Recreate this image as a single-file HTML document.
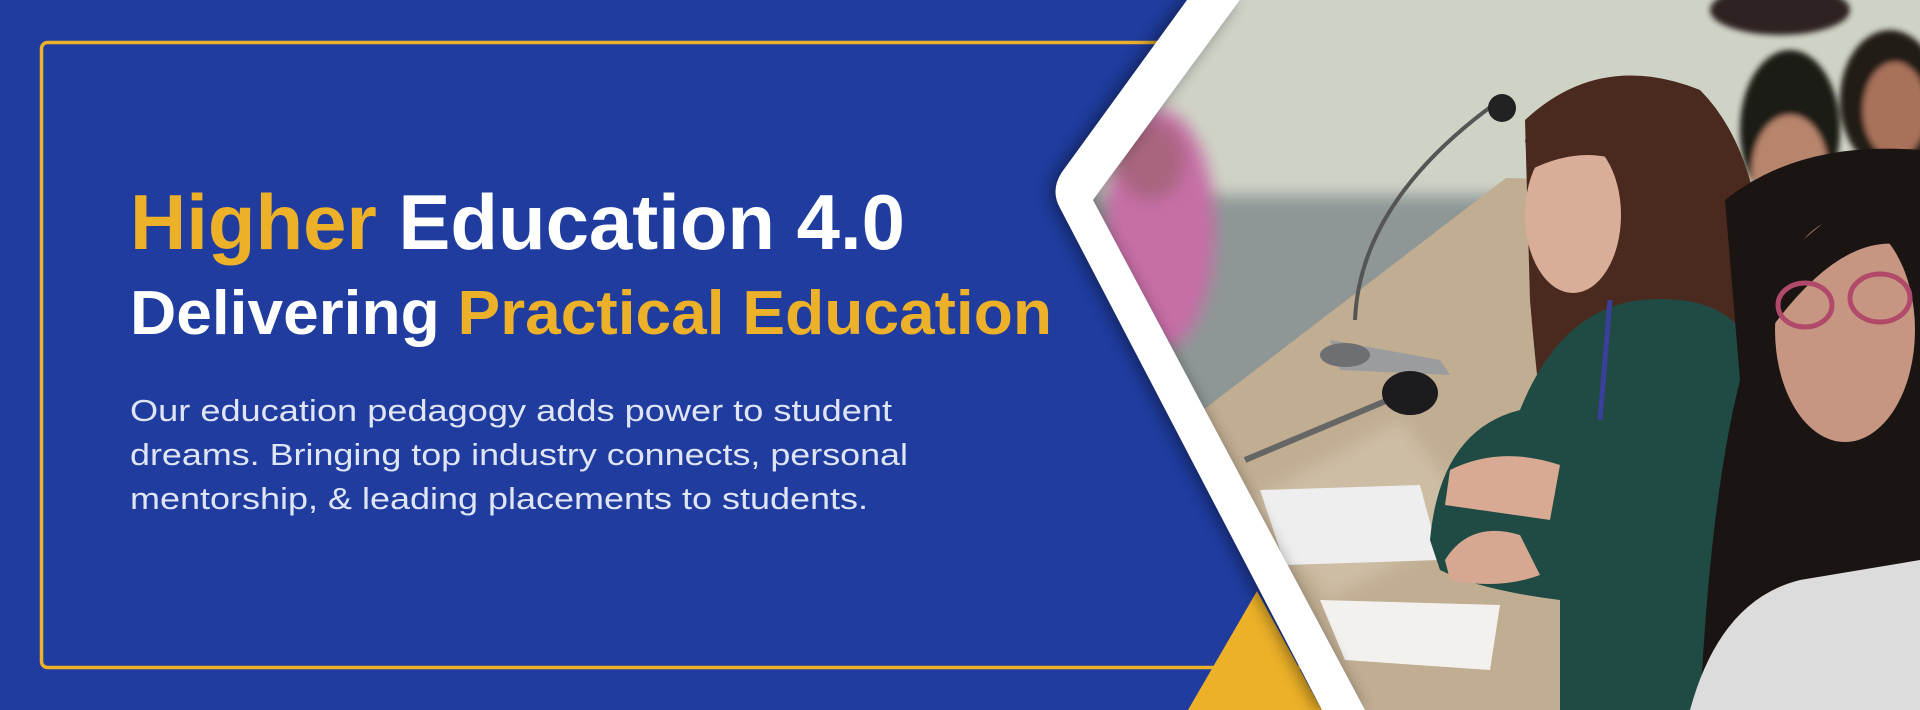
<!DOCTYPE html>
<html><head><meta charset="utf-8"><style>
html,body{margin:0;padding:0;width:1920px;height:710px;overflow:hidden;background:#1f3c9e}
svg{display:block}
</style></head><body>
<svg width="1920" height="710" viewBox="0 0 1920 710" xmlns="http://www.w3.org/2000/svg">
<defs>
<clipPath id="photo"><polygon points="1240,0 1920,0 1920,710 1365,710 1093,200"/></clipPath>
<filter id="b8"><feGaussianBlur stdDeviation="8"/></filter>
<filter id="b3"><feGaussianBlur stdDeviation="3"/></filter>
<filter id="sh" x="-20%" y="-20%" width="140%" height="140%"><feGaussianBlur stdDeviation="8"/></filter>
</defs>
<rect width="1920" height="710" fill="#1f3c9e"/>
<rect x="41.5" y="42.5" width="1400" height="625" rx="6" fill="none" stroke="#ecb128" stroke-width="3.5"/>
<polygon points="1188,710 1257,591 1322,710" fill="#ecb128"/>
<g clip-path="url(#photo)">
<rect x="1000" y="0" width="920" height="710" fill="#cfd3c6"/>
<rect x="1000" y="195" width="500" height="230" fill="#8e9796" filter="url(#b8)"/>
<g filter="url(#b8)">
<ellipse cx="1160" cy="230" rx="55" ry="120" fill="#c66ea6"/>
<ellipse cx="1150" cy="160" rx="35" ry="40" fill="#a9657f"/>
</g>
<polygon points="1190,420 1506,178 1600,180 1600,710 1330,710" fill="#c0ad92"/>
<polygon points="1250,500 1400,420 1480,520 1330,600" fill="#cdbda4" filter="url(#b8)"/>
<path d="M1355,320 Q1360,200 1500,100" stroke="#555" stroke-width="4" fill="none"/>
<ellipse cx="1502" cy="108" rx="14" ry="14" fill="#222"/>
<path d="M1330,340 L1440,360 L1450,375 L1340,370 Z" fill="#9a9c9e"/>
<ellipse cx="1345" cy="355" rx="25" ry="12" fill="#6d6f72"/>
<path d="M1245,460 L1400,395" stroke="#666" stroke-width="6"/>
<ellipse cx="1410" cy="393" rx="28" ry="22" fill="#1c1c1f"/>
<polygon points="1260,490 1420,485 1440,560 1285,565" fill="#eeeeee"/>
<polygon points="1320,600 1500,605 1490,670 1345,660" fill="#f3f1ee"/>
<g filter="url(#b3)">
<ellipse cx="1780" cy="10" rx="70" ry="25" fill="#2e2420"/>
<ellipse cx="1790" cy="130" rx="50" ry="80" fill="#1f1a18"/>
<ellipse cx="1790" cy="170" rx="38" ry="55" fill="#b7846c"/>
<ellipse cx="1890" cy="100" rx="50" ry="70" fill="#241c19"/>
<ellipse cx="1895" cy="110" rx="32" ry="48" fill="#a7715a"/>
<ellipse cx="1770" cy="250" rx="45" ry="60" fill="#e3e0dc"/>
</g>
<path d="M1525,120 Q1600,50 1700,90 Q1770,160 1765,330 Q1775,470 1730,560 L1560,560 Q1540,420 1530,300 Z" fill="#4a2a1e"/>
<path d="M1430,540 Q1440,430 1520,410 Q1560,310 1640,300 Q1750,290 1760,380 L1770,710 L1560,710 L1560,600 Q1480,590 1440,570 Z" fill="#1f4b44"/>
<path d="M1450,470 Q1500,445 1560,465 L1550,520 Q1480,510 1445,505 Z" fill="#d8aa93"/>
<path d="M1445,560 Q1470,520 1520,535 L1540,575 Q1500,590 1450,580 Z" fill="#d6a791"/>
<ellipse cx="1573" cy="215" rx="48" ry="78" fill="#d9ad97"/>
<path d="M1525,140 Q1570,95 1640,115 Q1680,150 1660,260 L1640,170 Q1590,140 1530,170 Z" fill="#4a2a1e"/>
<path d="M1610,300 L1600,420" stroke="#3a3f9a" stroke-width="5"/>
<path d="M1725,200 Q1800,140 1920,150 L1920,710 L1700,710 Q1710,500 1740,380 Z" fill="#1a1412"/>
<ellipse cx="1845" cy="330" rx="70" ry="112" fill="#c69682"/>
<path d="M1760,290 Q1840,180 1920,200 L1920,250 Q1850,220 1770,330 Z" fill="#1a1412"/>
<ellipse cx="1805" cy="305" rx="27" ry="22" fill="none" stroke="#b14a6a" stroke-width="5"/>
<ellipse cx="1880" cy="298" rx="30" ry="24" fill="none" stroke="#b14a6a" stroke-width="5"/>
<path d="M1690,710 Q1720,600 1800,580 L1920,560 L1920,710 Z" fill="#dcdcdc"/>
</g>
<path d="M1187,0 L1062,172 Q1050,190 1060,208 L1322,710 L1365,710 L1093,200 L1240,0 Z" fill="#000" opacity="0.45" filter="url(#sh)" transform="translate(-4,0)"/>
<path d="M1187,0 L1062,172 Q1050,190 1060,208 L1322,710 L1365,710 L1093,200 L1240,0 Z" fill="#ffffff"/>
<g font-family="Liberation Sans, sans-serif" font-weight="bold">
<text x="130" y="249" font-size="78" textLength="775" lengthAdjust="spacingAndGlyphs"><tspan fill="#ecb128">Higher</tspan><tspan fill="#ffffff"> Education 4.0</tspan></text>
<text x="130" y="334" font-size="62" textLength="922" lengthAdjust="spacingAndGlyphs"><tspan fill="#ffffff">Delivering</tspan><tspan fill="#ecb128"> Practical Education</tspan></text>
</g>
<g font-family="Liberation Sans, sans-serif" font-size="31" fill="#dfe5f4">
<text x="130" y="421" textLength="762" lengthAdjust="spacingAndGlyphs">Our education pedagogy adds power to student</text>
<text x="130" y="465" textLength="778" lengthAdjust="spacingAndGlyphs">dreams. Bringing top industry connects, personal</text>
<text x="130" y="509" textLength="738" lengthAdjust="spacingAndGlyphs">mentorship, &amp; leading placements to students.</text>
</g>
</svg>
</body></html>
